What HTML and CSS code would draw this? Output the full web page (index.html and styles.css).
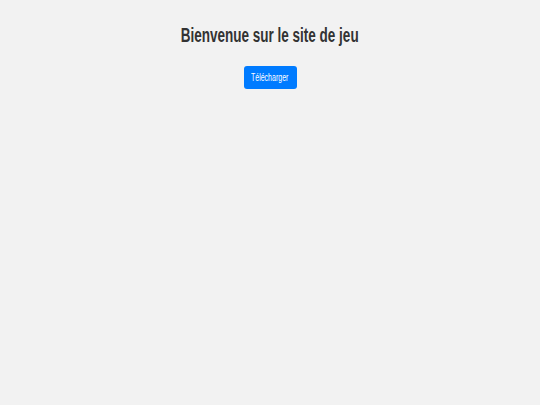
FILE: index.html
```html
<!DOCTYPE html>
<html lang="fr">
<head>
    <meta charset="UTF-8">
    <meta name="viewport" content="width=device-width, initial-scale=1.0">
    <title>Site de jeu</title>
    <link rel="stylesheet" href="styles.css">
</head>
<body>
    <div class="container">
        <h1>Bienvenue sur le site de jeu</h1>
        <a href="#" class="download-btn"><span>Télécharger</span></a>
    </div>
</body>
</html>
```

FILE: styles.css
```css
/* General Styles */
* {
    margin: 0;
    padding: 0;
    box-sizing: border-box;
}

body {
    background: #f2f2f2;
    color: #333;
    font-family: 'Liberation Sans', Arial, sans-serif;
    min-height: 100vh;
}

.container {
    display: flex;
    flex-direction: column;
    align-items: center;
    padding-top: 23px;
}

h1 {
    font-size: 20px;
    font-weight: bold;
    line-height: 24px;
    transform: scaleX(0.675);
    white-space: nowrap;
}

.download-btn {
    display: flex;
    justify-content: center;
    align-items: center;
    margin-top: 19px;
    width: 53px;
    height: 23px;
    background: #007bff;
    color: white;
    border-radius: 3px;
    text-decoration: none;
    font-size: 10px;
}

.download-btn span {
    display: inline-block;
    white-space: nowrap;
    transform: scaleX(0.7);
}
```
